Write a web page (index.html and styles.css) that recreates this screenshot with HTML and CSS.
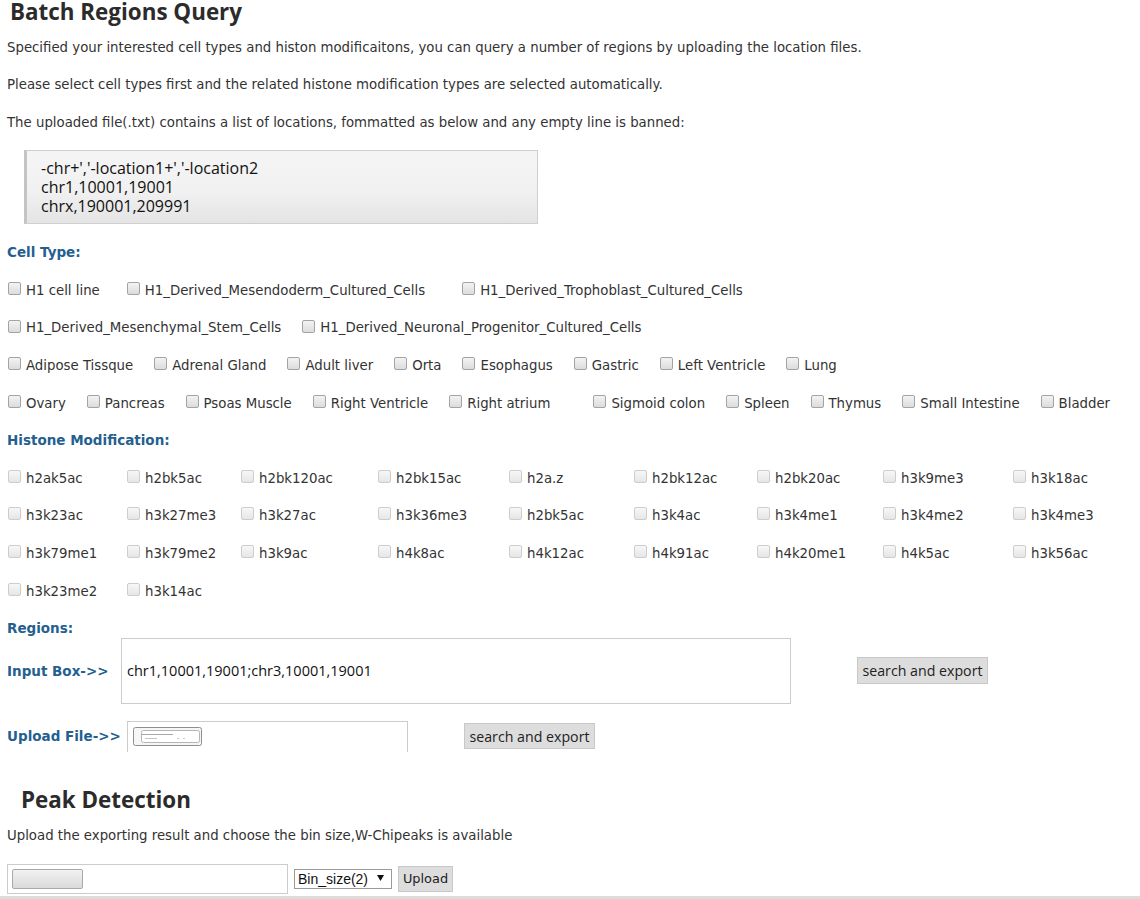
FILE: index.html
```html
<!DOCTYPE html>
<html>
<head>
<meta charset="utf-8">
<title>Batch Regions Query</title>
<link rel="stylesheet" href="styles.css">
</head>
<body>
<div class="page">
  <h1 class="title">Batch Regions Query</h1>
  <p class="text first">Specified your interested cell types and histon modificaitons, you can query a number of regions by uploading the location files.</p>
  <p class="text">Please select cell types first and the related histone modification types are selected automatically.</p>
  <p class="text third">The uploaded file(.txt) contains a list of locations, fommatted as below and any empty line is banned:</p>

  <div class="code">
    <div class="code-line">-chr+','-location1+','-location2</div>
    <div class="code-line">chr1,10001,19001</div>
    <div class="code-line">chrx,190001,209991</div>
  </div>

  <h3 class="label">Cell Type:</h3>
  <div class="cell-row first-row">
    <label class="opt gap26"><input type="checkbox" class="cb"><span>H1 cell line</span></label>
    <label class="opt gap36"><input type="checkbox" class="cb"><span>H1_Derived_Mesendoderm_Cultured_Cells</span></label>
    <label class="opt"><input type="checkbox" class="cb"><span>H1_Derived_Trophoblast_Cultured_Cells</span></label>
  </div>
  <div class="cell-row">
    <label class="opt"><input type="checkbox" class="cb"><span>H1_Derived_Mesenchymal_Stem_Cells</span></label>
    <label class="opt"><input type="checkbox" class="cb"><span>H1_Derived_Neuronal_Progenitor_Cultured_Cells</span></label>
  </div>
  <div class="cell-row">
    <label class="opt"><input type="checkbox" class="cb"><span>Adipose Tissque</span></label>
    <label class="opt"><input type="checkbox" class="cb"><span>Adrenal Gland</span></label>
    <label class="opt"><input type="checkbox" class="cb"><span>Adult liver</span></label>
    <label class="opt"><input type="checkbox" class="cb"><span>Orta</span></label>
    <label class="opt"><input type="checkbox" class="cb"><span>Esophagus</span></label>
    <label class="opt"><input type="checkbox" class="cb"><span>Gastric</span></label>
    <label class="opt"><input type="checkbox" class="cb"><span>Left Ventricle</span></label>
    <label class="opt"><input type="checkbox" class="cb"><span>Lung</span></label>
  </div>
  <div class="cell-row">
    <label class="opt"><input type="checkbox" class="cb"><span>Ovary</span></label>
    <label class="opt"><input type="checkbox" class="cb"><span>Pancreas</span></label>
    <label class="opt"><input type="checkbox" class="cb"><span>Psoas Muscle</span></label>
    <label class="opt"><input type="checkbox" class="cb"><span>Right Ventricle</span></label>
    <label class="opt gap42"><input type="checkbox" class="cb"><span>Right atrium</span></label>
    <label class="opt"><input type="checkbox" class="cb"><span>Sigmoid colon</span></label>
    <label class="opt"><input type="checkbox" class="cb"><span>Spleen</span></label>
    <label class="opt"><input type="checkbox" class="cb"><span>Thymus</span></label>
    <label class="opt"><input type="checkbox" class="cb"><span>Small Intestine</span></label>
    <label class="opt"><input type="checkbox" class="cb"><span>Bladder</span></label>
  </div>

  <h3 class="label">Histone Modification:</h3>
  <div class="histones">
    <label class="hopt"><input type="checkbox" class="cb light"><span>h2ak5ac</span></label>
    <label class="hopt"><input type="checkbox" class="cb light"><span>h2bk5ac</span></label>
    <label class="hopt"><input type="checkbox" class="cb light"><span>h2bk120ac</span></label>
    <label class="hopt"><input type="checkbox" class="cb light"><span>h2bk15ac</span></label>
    <label class="hopt"><input type="checkbox" class="cb light"><span>h2a.z</span></label>
    <label class="hopt"><input type="checkbox" class="cb light"><span>h2bk12ac</span></label>
    <label class="hopt"><input type="checkbox" class="cb light"><span>h2bk20ac</span></label>
    <label class="hopt"><input type="checkbox" class="cb light"><span>h3k9me3</span></label>
    <label class="hopt"><input type="checkbox" class="cb light"><span>h3k18ac</span></label>

    <label class="hopt"><input type="checkbox" class="cb light"><span>h3k23ac</span></label>
    <label class="hopt"><input type="checkbox" class="cb light"><span>h3k27me3</span></label>
    <label class="hopt"><input type="checkbox" class="cb light"><span>h3k27ac</span></label>
    <label class="hopt"><input type="checkbox" class="cb light"><span>h3k36me3</span></label>
    <label class="hopt"><input type="checkbox" class="cb light"><span>h2bk5ac</span></label>
    <label class="hopt"><input type="checkbox" class="cb light"><span>h3k4ac</span></label>
    <label class="hopt"><input type="checkbox" class="cb light"><span>h3k4me1</span></label>
    <label class="hopt"><input type="checkbox" class="cb light"><span>h3k4me2</span></label>
    <label class="hopt"><input type="checkbox" class="cb light"><span>h3k4me3</span></label>

    <label class="hopt"><input type="checkbox" class="cb light"><span>h3k79me1</span></label>
    <label class="hopt"><input type="checkbox" class="cb light"><span>h3k79me2</span></label>
    <label class="hopt"><input type="checkbox" class="cb light"><span>h3k9ac</span></label>
    <label class="hopt"><input type="checkbox" class="cb light"><span>h4k8ac</span></label>
    <label class="hopt"><input type="checkbox" class="cb light"><span>h4k12ac</span></label>
    <label class="hopt"><input type="checkbox" class="cb light"><span>h4k91ac</span></label>
    <label class="hopt"><input type="checkbox" class="cb light"><span>h4k20me1</span></label>
    <label class="hopt"><input type="checkbox" class="cb light"><span>h4k5ac</span></label>
    <label class="hopt"><input type="checkbox" class="cb light"><span>h3k56ac</span></label>

    <label class="hopt"><input type="checkbox" class="cb light"><span>h3k23me2</span></label>
    <label class="hopt"><input type="checkbox" class="cb light"><span>h3k14ac</span></label>
  </div>

  <h3 class="label regions">Regions:</h3>
  <div class="region-row input-row">
    <span class="label inline input-label">Input Box-&gt;&gt;</span>
    <input class="region-input" type="text" value="chr1,10001,19001;chr3,10001,19001">
    <button class="btn input-btn" type="button">search and export</button>
  </div>
  <div class="region-row upload-row">
    <span class="label inline upload-label">Upload File-&gt;&gt;</span>
    <div class="filebox">
      <span class="fake-btn">
        <svg width="69" height="19" viewBox="0 0 69 19">
          <rect x="0.5" y="0.5" width="68" height="18" rx="2" fill="#f6f6f6" stroke="#8e8e8e"/>
          <rect x="8.5" y="3.5" width="58" height="12" rx="2" fill="#ffffff" stroke="#b5b5b5"/>
          <line x1="9" y1="7.5" x2="40" y2="7.5" stroke="#a8a8a8"/>
          <line x1="12" y1="11.5" x2="24" y2="11.5" stroke="#c4c4c4"/>
          <line x1="44" y1="11.5" x2="46" y2="11.5" stroke="#c8c8c8"/>
          <line x1="50" y1="11.5" x2="52" y2="11.5" stroke="#c8c8c8"/>
        </svg>
      </span>
    </div>
    <button class="btn upload-btn" type="button">search and export</button>
  </div>

  <h2 class="title peak">Peak Detection</h2>
  <p class="text first peak-text">Upload the exporting result and choose the bin size,W-Chipeaks is available</p>
  <div class="peak-row">
    <div class="filebox full">
      <span class="fake-btn2"></span>
    </div>
    <div class="select">
      <span class="select-text">Bin_size(2)</span>
      <svg class="arrow" width="7" height="6" viewBox="0 0 7 6"><path d="M0 0 H7 L3.5 6 Z" fill="#111"/></svg>
    </div>
    <button class="btn small-btn" type="button">Upload</button>
  </div>
</div>
<div class="bottom-line"></div>
</body>
</html>
```

FILE: styles.css
```css
html, body {
  margin: 0;
  padding: 0;
  background: #ffffff;
}

body {
  font-family: "DejaVu Sans", Verdana, sans-serif;
  font-size: 13.3px;
  color: #333333;
}

.page {
  padding: 0 7px;
}

.title {
  margin: -2px 0 0 3px;
  font-family: "Open Sans", "Liberation Sans", sans-serif;
  font-weight: 700;
  font-size: 22.4px;
  line-height: 28px;
  color: #2b2b2b;
}

.title.peak {
  margin: 34px 0 0 14px;
}

.text {
  margin: 19px 0 0 0;
  line-height: 18px;
}

.text.first {
  margin-top: 13px;
}

.text.peak-text {
  margin-top: 13px;
}

.text.third {
  margin-top: 19.5px;
}

.code {
  margin: 18.5px 0 0 17px;
  width: 496px;
  padding: 8px 0 7px 14px;
  border: 1px solid #cfcfcf;
  border-left: 3px solid #c4c4c4;
  background: linear-gradient(to bottom, #f5f5f5 0%, #f1f1f1 55%, #e4e4e4 100%);
  font-family: "Open Sans", "Liberation Sans", sans-serif;
  font-size: 16px;
  color: #111111;
}

.code-line {
  height: 19px;
  line-height: 19px;
  white-space: nowrap;
}

.label {
  margin: 19px 0 0 0;
  font-size: 13.5px;
  font-weight: 700;
  line-height: 18px;
  color: #245f90;
}

.label.regions {
  margin-top: 18.8px;
}

.label.inline {
  margin: 0;
  flex: none;
}

.cell-row {
  display: flex;
  align-items: center;
  column-gap: 20px;
  height: 18px;
  margin-top: 19.7px;
  white-space: nowrap;
}

.cell-row.first-row {
  margin-top: 20px;
}

.opt {
  display: flex;
  align-items: center;
}

.opt.gap26 {
  margin-right: 6px;
}

.opt.gap36 {
  margin-right: 16px;
}

.opt.gap42 {
  margin-right: 22px;
}

.cb {
  appearance: none;
  -webkit-appearance: none;
  flex: none;
  width: 13px;
  height: 13px;
  margin: 0 5px 3px 1px;
  border: 1px solid #a3a3a3;
  border-radius: 2px;
  background: linear-gradient(to bottom, #f3f3f3, #dcdcdc);
  box-sizing: border-box;
}

.cb.light {
  border-color: #cdcdcd;
  background: linear-gradient(to bottom, #f7f7f7, #e6e6e6);
  margin-bottom: 4px;
}

.histones {
  display: grid;
  grid-template-columns: 119px 114px 137px 131px 125px 123px 126px 130px auto;
  grid-auto-rows: 18px;
  row-gap: 19.7px;
  margin-top: 20px;
  white-space: nowrap;
}

.hopt {
  display: flex;
  align-items: center;
}

.region-row {
  display: flex;
  align-items: center;
}

.input-row {
  margin-top: 1px;
  height: 66px;
}

.input-label {
  width: 114px;
}

.region-input {
  box-sizing: border-box;
  width: 670px;
  height: 66px;
  margin: 0;
  padding: 0 0 0 5px;
  border: 1px solid #cccccc;
  font-family: "Open Sans", "Liberation Sans", sans-serif;
  font-size: 14.5px;
  color: #111111;
  outline: none;
}

.btn {
  box-sizing: border-box;
  margin: 0;
  height: 27px;
  padding: 0;
  border: 1px solid #c8c8c8;
  background: #dddddd;
  font-family: "Open Sans", "Liberation Sans", sans-serif;
  font-size: 14.2px;
  color: #222222;
  border-radius: 0;
}

.input-btn {
  margin-left: 66px;
  width: 131px;
}

.upload-row {
  margin-top: 17px;
  height: 31px;
}

.upload-label {
  width: 120px;
}

.filebox {
  box-sizing: border-box;
  width: 281px;
  height: 31px;
  border: 1px solid #cccccc;
  border-bottom: none;
  padding: 5px 0 0 5px;
}

.fake-btn {
  display: block;
  width: 69px;
  height: 19px;
}

.fake-btn svg {
  display: block;
}

.upload-btn {
  margin-left: 56px;
  width: 131px;
  height: 26px;
}

.peak-row {
  display: flex;
  align-items: center;
  margin-top: 19px;
  height: 30px;
}

.filebox.full {
  height: 30px;
  border-bottom: 1px solid #cccccc;
  padding: 4px 0 0 4px;
}

.fake-btn2 {
  display: block;
  box-sizing: border-box;
  width: 71px;
  height: 20px;
  border: 1px solid #a9a9a9;
  border-radius: 2px;
  background: linear-gradient(to bottom, #f2f2f2, #dadada);
}

.select {
  box-sizing: border-box;
  display: flex;
  align-items: center;
  margin-left: 6px;
  width: 98px;
  height: 20px;
  padding: 0 0 0 3px;
  border: 1px solid #9a9a9a;
  font-family: "Liberation Sans", Arial, sans-serif;
  font-size: 14px;
  color: #111111;
}

.select-text {
  flex: 1;
}

.arrow {
  margin: 0 7px 1px 0;
}

.small-btn {
  margin-left: 6px;
  width: 55px;
  height: 26px;
  font-family: "DejaVu Sans", Verdana, sans-serif;
  font-size: 12.9px;
}

.bottom-line {
  margin-top: 2px;
  height: 3px;
  background: #dcdcdc;
}
```
